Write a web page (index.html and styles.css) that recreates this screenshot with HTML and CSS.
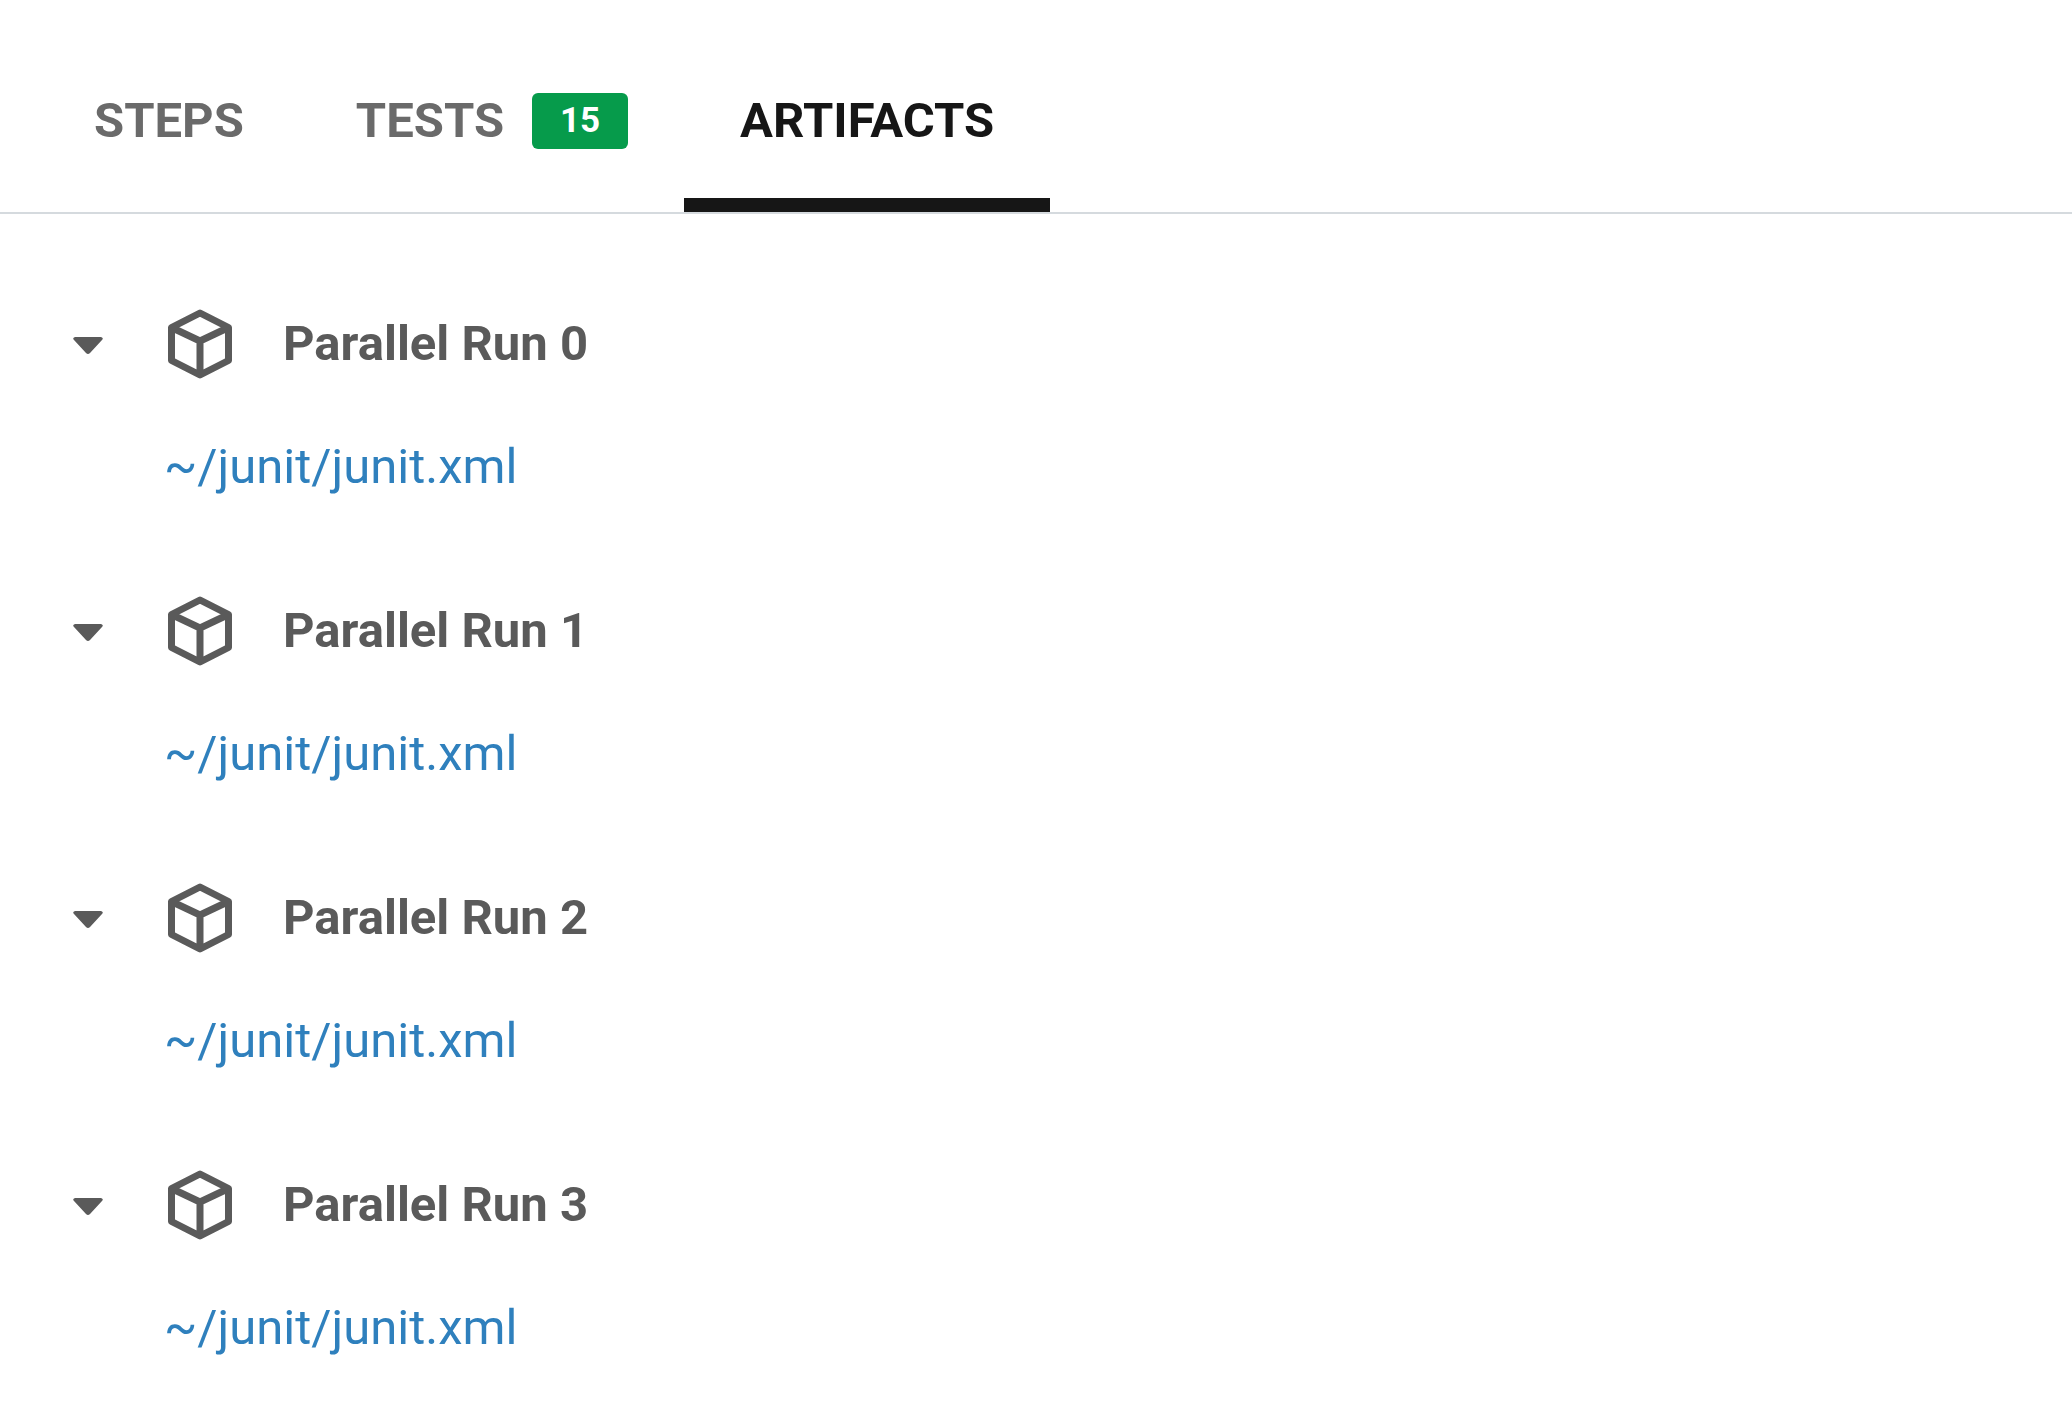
FILE: index.html
```html
<!DOCTYPE html>
<html lang="en">
<head>
<meta charset="utf-8">
<title>Artifacts</title>
<link rel="stylesheet" href="styles.css">
</head>
<body>
<svg class="sprite" aria-hidden="true">
  <symbol id="caret" viewBox="0 -4 30 22"><path d="M2 0h26q3 1 1 3L17 16q-2 2-4 0L1 3q-2-2 1-3z" fill="currentColor"/></symbol>
  <symbol id="cube" viewBox="0 0 64 70"><path d="M32 4 60.500 18.500V51.500L32 66 3.500 51.500V18.500zM3.500 18.500 32 32 60.500 18.500M32 32V66" fill="none" stroke="currentColor" stroke-width="7" stroke-linejoin="round"/></symbol>
</svg>
<nav class="tabs" role="tablist" aria-label="Job details">
  <button class="tab" type="button" role="tab" aria-selected="false">STEPS</button>
  <button class="tab" type="button" role="tab" aria-selected="false">TESTS <span class="badge">15</span></button>
  <button class="tab active" type="button" role="tab" aria-selected="true">ARTIFACTS</button>
</nav>
<main class="runs">
  <section class="run">
    <button class="run-toggle" type="button" aria-expanded="true"><svg class="caret"><use href="#caret"/></svg><svg class="cube"><use href="#cube"/></svg>Parallel Run 0</button>
    <a class="file" href="#run-0">~/junit/junit.xml</a>
  </section>
  <section class="run">
    <button class="run-toggle" type="button" aria-expanded="true"><svg class="caret"><use href="#caret"/></svg><svg class="cube"><use href="#cube"/></svg>Parallel Run 1</button>
    <a class="file" href="#run-1">~/junit/junit.xml</a>
  </section>
  <section class="run">
    <button class="run-toggle" type="button" aria-expanded="true"><svg class="caret"><use href="#caret"/></svg><svg class="cube"><use href="#cube"/></svg>Parallel Run 2</button>
    <a class="file" href="#run-2">~/junit/junit.xml</a>
  </section>
  <section class="run">
    <button class="run-toggle" type="button" aria-expanded="true"><svg class="caret"><use href="#caret"/></svg><svg class="cube"><use href="#cube"/></svg>Parallel Run 3</button>
    <a class="file" href="#run-3">~/junit/junit.xml</a>
  </section>
</main>
</body>
</html>
```
FILE: styles.css
```css
* { box-sizing: border-box; }
body {
  margin: 0;
  background: #fff;
  color: #5a5a5a;
  font: 400 49px/70px Roboto, sans-serif;
}
button {
  border: 0;
  background: none;
  color: inherit;
  font: inherit;
  font-weight: 700;
  cursor: pointer;
}
.sprite { position: absolute; width: 0; height: 0; }
.tabs {
  display: flex;
  padding: 28px 38px 0;
  border-bottom: 2px solid #d5dade;
}
.tab {
  display: flex;
  align-items: center;
  gap: 28px;
  height: 184px;
  padding: 30px 56px 14px;
  border-bottom: 14px solid transparent;
  color: #6a6a6a;
}
.tab.active { border-bottom-color: #161616; color: #161616; }
.badge {
  width: 96px;
  border-radius: 6px;
  background: #069b4b;
  color: #fff;
  font-size: 35px;
  line-height: 56px;
  text-align: center;
}
.runs {
  display: flex;
  flex-direction: column;
  gap: 94px;
  padding: 95px 73px 25px;
}
.run {
  display: flex;
  flex-direction: column;
  align-items: flex-start;
  gap: 53px;
}
.run-toggle {
  display: flex;
  align-items: center;
  padding: 0;
}
.caret { width: 30px; height: 22px; margin-right: 65px; }
.cube { width: 64px; height: 70px; margin-right: 51px; }
.file {
  margin-left: 91px;
  color: #2f80bd;
  text-decoration: none;
}
```
